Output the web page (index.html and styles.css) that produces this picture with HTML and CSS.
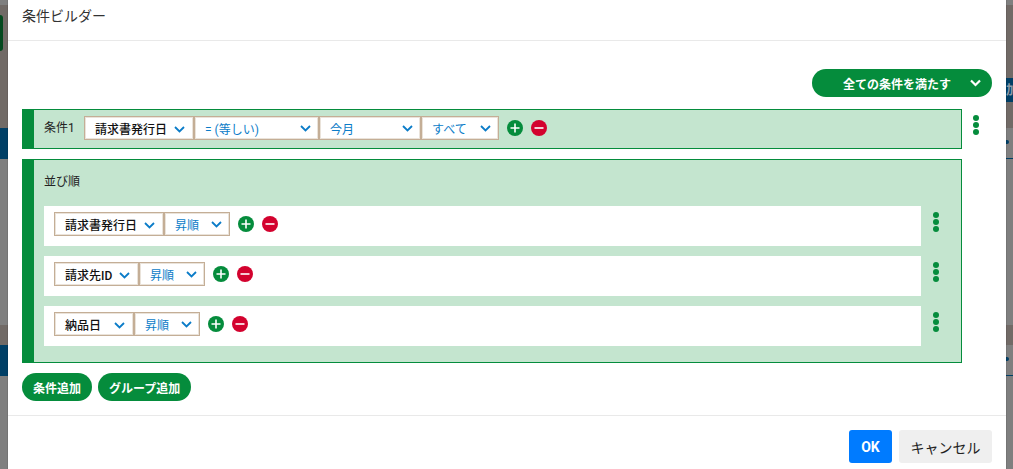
FILE: index.html
```html
<!DOCTYPE html>
<html>
<head>
  <meta charset="utf-8">
  <title>条件ビルダー</title>
  <link rel="stylesheet" href="styles.css">
</head>
<body>
  <!-- page behind the dialog, only the edges show -->
  <div class="backdrop">
    <span class="bg-brown bg-l1"></span>
    <span class="bg-brown bg-l2"></span>
    <span class="bg-tab"></span>
    <span class="bg-band bg-band-left1"></span>
    <span class="bg-band bg-band-left2"></span>
    <span class="bg-brown bg-r1"></span>
    <span class="bg-brown bg-r2"></span>
    <span class="bg-band bg-band-right1">加</span>
    <span class="bg-dot bg-dot1"></span>
    <span class="bg-band bg-line1"></span>
    <span class="bg-dot bg-dot2"></span>
    <span class="bg-band bg-line2"></span>
  </div>

  <div class="modal">
    <div class="modal-header">条件ビルダー</div>

    <div class="modal-body">
      <div class="match-row">
        <button class="match-btn">
          <span>全ての条件を満たす</span>
          <svg class="chev" width="11" height="8" viewBox="0 0 11 8"><path d="M1 1.500 5.500 6 10 1.500" fill="none" stroke="#fff" stroke-width="2.200"/></svg>
        </button>
      </div>

      <div class="rule-line">
        <div class="group rule">
          <span class="rule-label">条件1</span>
          <div class="selects">
            <div class="sel sel-field w-110">請求書発行日<svg class="arrow" width="11" height="7" viewBox="0 0 11 7"><path d="M1 1 5.500 5.500 10 1" fill="none" stroke="#0b7cc8" stroke-width="1.800"/></svg></div>
            <div class="sel w-125">= (等しい)<svg class="arrow" width="11" height="7" viewBox="0 0 11 7"><path d="M1 1 5.500 5.500 10 1" fill="none" stroke="#0b7cc8" stroke-width="1.800"/></svg></div>
            <div class="sel w-102">今月<svg class="arrow" width="11" height="7" viewBox="0 0 11 7"><path d="M1 1 5.500 5.500 10 1" fill="none" stroke="#0b7cc8" stroke-width="1.800"/></svg></div>
            <div class="sel w-78">すべて<svg class="arrow" width="11" height="7" viewBox="0 0 11 7"><path d="M1 1 5.500 5.500 10 1" fill="none" stroke="#0b7cc8" stroke-width="1.800"/></svg></div>
          </div>
          <svg class="round" width="16" height="16" viewBox="0 0 16 16"><circle cx="8" cy="8" r="8" fill="#058c3c"/><path d="M8 3.500v9M3.500 8h9" stroke="#fff" stroke-width="1.600"/></svg>
          <svg class="round" width="16" height="16" viewBox="0 0 16 16"><circle cx="8" cy="8" r="8" fill="#d3022e"/><path d="M3.500 8h9" stroke="#fff" stroke-width="1.600"/></svg>
        </div>
        <div class="dots"><i></i><i></i><i></i></div>
      </div>

      <div class="rule-line sort-line">
        <div class="group sort">
          <div class="sort-title">並び順</div>

          <div class="sort-line-item">
            <div class="sort-row">
              <div class="selects">
                <div class="sel sel-field w-110">請求書発行日<svg class="arrow" width="11" height="7" viewBox="0 0 11 7"><path d="M1 1 5.500 5.500 10 1" fill="none" stroke="#0b7cc8" stroke-width="1.800"/></svg></div>
                <div class="sel w-66">昇順<svg class="arrow" width="11" height="7" viewBox="0 0 11 7"><path d="M1 1 5.500 5.500 10 1" fill="none" stroke="#0b7cc8" stroke-width="1.800"/></svg></div>
              </div>
              <svg class="round" width="16" height="16" viewBox="0 0 16 16"><circle cx="8" cy="8" r="8" fill="#058c3c"/><path d="M8 3.500v9M3.500 8h9" stroke="#fff" stroke-width="1.600"/></svg>
              <svg class="round" width="16" height="16" viewBox="0 0 16 16"><circle cx="8" cy="8" r="8" fill="#d3022e"/><path d="M3.500 8h9" stroke="#fff" stroke-width="1.600"/></svg>
            </div>
            <div class="dots"><i></i><i></i><i></i></div>
          </div>

          <div class="sort-line-item">
            <div class="sort-row">
              <div class="selects">
                <div class="sel sel-field w-85">請求先ID<svg class="arrow" width="11" height="7" viewBox="0 0 11 7"><path d="M1 1 5.500 5.500 10 1" fill="none" stroke="#0b7cc8" stroke-width="1.800"/></svg></div>
                <div class="sel w-66">昇順<svg class="arrow" width="11" height="7" viewBox="0 0 11 7"><path d="M1 1 5.500 5.500 10 1" fill="none" stroke="#0b7cc8" stroke-width="1.800"/></svg></div>
              </div>
              <svg class="round" width="16" height="16" viewBox="0 0 16 16"><circle cx="8" cy="8" r="8" fill="#058c3c"/><path d="M8 3.500v9M3.500 8h9" stroke="#fff" stroke-width="1.600"/></svg>
              <svg class="round" width="16" height="16" viewBox="0 0 16 16"><circle cx="8" cy="8" r="8" fill="#d3022e"/><path d="M3.500 8h9" stroke="#fff" stroke-width="1.600"/></svg>
            </div>
            <div class="dots"><i></i><i></i><i></i></div>
          </div>

          <div class="sort-line-item">
            <div class="sort-row">
              <div class="selects">
                <div class="sel sel-field w-80">納品日<svg class="arrow" width="11" height="7" viewBox="0 0 11 7"><path d="M1 1 5.500 5.500 10 1" fill="none" stroke="#0b7cc8" stroke-width="1.800"/></svg></div>
                <div class="sel w-66">昇順<svg class="arrow" width="11" height="7" viewBox="0 0 11 7"><path d="M1 1 5.500 5.500 10 1" fill="none" stroke="#0b7cc8" stroke-width="1.800"/></svg></div>
              </div>
              <svg class="round" width="16" height="16" viewBox="0 0 16 16"><circle cx="8" cy="8" r="8" fill="#058c3c"/><path d="M8 3.500v9M3.500 8h9" stroke="#fff" stroke-width="1.600"/></svg>
              <svg class="round" width="16" height="16" viewBox="0 0 16 16"><circle cx="8" cy="8" r="8" fill="#d3022e"/><path d="M3.500 8h9" stroke="#fff" stroke-width="1.600"/></svg>
            </div>
            <div class="dots"><i></i><i></i><i></i></div>
          </div>
        </div>
      </div>

      <div class="add-row">
        <button class="add-btn">条件追加</button>
        <button class="add-btn">グループ追加</button>
      </div>
    </div>

    <div class="modal-footer">
      <button class="btn-ok">OK</button>
      <button class="btn-cancel">キャンセル</button>
    </div>
  </div>
</body>
</html>
```

FILE: styles.css
```css
* {
  margin: 0;
  padding: 0;
  box-sizing: border-box;
}

html, body {
  height: 469px;
  overflow: hidden;
}

body {
  background: #7f7f7f;
  font-family: "Roboto", "Noto Sans CJK JP", sans-serif;
  color: #222;
  position: relative;
}

.backdrop {
  position: absolute;
  inset: 0;
}

.backdrop span {
  position: absolute;
  display: block;
}

.bg-brown {
  background: #716a66;
  width: 8px;
}

.bg-l1 { left: 0; top: 5px; height: 123px; }
.bg-l2 { left: 0; top: 325px; height: 20px; }
.bg-r1 { right: 0; top: 5px; height: 123px; }
.bg-r2 { right: 0; top: 325px; height: 20px; }

.bg-tab {
  left: 0;
  top: 15px;
  width: 3px;
  height: 36px;
  background: #04491f;
  border-radius: 0 3px 3px 0;
}

.bg-band {
  background: #003f66;
}

.bg-band-left1 {
  left: 0;
  top: 128px;
  width: 8px;
  height: 31px;
}

.bg-band-left2 {
  left: 0;
  top: 345px;
  width: 8px;
  height: 31px;
}

.bg-band-right1 {
  right: 0;
  top: 78px;
  width: 7px;
  height: 24px;
  overflow: hidden;
  font-size: 13px;
  font-weight: 700;
  line-height: 24px;
  color: #8d9aa6;
}

.bg-dot {
  width: 3px;
  height: 4px;
  right: 4px;
  background: #003f66;
  border-radius: 0 2px 2px 0;
}

.bg-dot1 { top: 140px; }
.bg-dot2 { top: 357px; }

.bg-line1 { right: 0; top: 158px; width: 7px; height: 1px; }
.bg-line2 { right: 0; top: 375px; width: 7px; height: 1px; }

.modal {
  width: 998px;
  height: 469px;
  margin-left: 8px;
  background: white;
  position: relative;
  box-shadow: 0 0 1px rgba(0,0,0,0.5);
  display: flex;
  flex-direction: column;
}

.modal-header {
  height: 41px;
  padding: 6px 14px 0;
  font-size: 14px;
  line-height: 20px;
  color: #333;
  border-bottom: 1px solid #e9e9e9;
}

.modal-body {
  flex: 1;
  padding: 28px 14px 0;
}

.match-row {
  display: flex;
  justify-content: flex-end;
  height: 28px;
  margin-bottom: 12px;
}

.match-btn {
  width: 180px;
  height: 28px;
  background: #058c3c;
  color: white;
  border: none;
  border-radius: 14px;
  font: inherit;
  font-size: 12px;
  font-weight: 700;
  display: flex;
  align-items: center;
  padding-left: 31px;
  position: relative;
}

.chev {
  position: absolute;
  right: 11px;
  top: 10px;
}

.rule-line {
  display: flex;
  align-items: flex-start;
}

.group {
  width: 940px;
  background: #c4e5cf;
  border: 1px solid #058c3c;
  border-left: 12px solid #058c3c;
}

.rule {
  height: 40px;
  display: flex;
  align-items: flex-start;
  padding: 6px 0 0 10px;
  margin-bottom: 10px;
}

.rule-label {
  font-size: 12px;
  line-height: 25px;
  width: 40px;
  color: #222;
}

.selects {
  display: flex;
  margin-right: 8px;
}

.sel {
  height: 24px;
  border: 1px solid #c4ae96;
  box-shadow: inset 0 0 0 1px rgba(196,174,150,0.35);
  background: white;
  font-size: 12px;
  color: #0b7cc8;
  display: flex;
  align-items: center;
  padding-left: 10px;
  position: relative;
}

.sel-field {
  color: #111;
  font-weight: 500;
}

.arrow {
  position: absolute;
  right: 7px;
  top: 8px;
}

.sel-field .arrow {
  right: 8px;
  top: 9px;
}

.w-110 { width: 110px; }
.w-125 { width: 125px; }
.w-102 { width: 102px; }
.w-78 { width: 78px; }
.w-85 { width: 85px; }
.w-80 { width: 80px; }
.w-66 { width: 66px; }

.round {
  margin: 4px 8px 0 0;
  flex: none;
}

.dots {
  width: 6px;
  margin-left: 11px;
  margin-top: 6px;
  display: flex;
  flex-direction: column;
  gap: 1px;
}

.dots i {
  display: block;
  width: 6px;
  height: 6px;
  border-radius: 50%;
  background: #058c3c;
}

.sort {
  height: 204px;
  padding: 0 0 0 10px;
}

.sort-title {
  font-size: 12px;
  color: #222;
  line-height: 16px;
  padding-top: 14px;
  height: 46px;
}

.sort-line-item {
  display: flex;
  align-items: flex-start;
  margin-bottom: 10px;
}

.sort-row {
  width: 877px;
  height: 40px;
  background: white;
  display: flex;
  align-items: flex-start;
  padding: 6px 0 0 10px;
}

.sort-line-item .dots {
  margin-left: 12px;
  margin-top: 6px;
}

.add-row {
  display: flex;
  gap: 6px;
  margin-top: 10px;
}

.add-btn {
  height: 28px;
  background: #058c3c;
  color: white;
  border: none;
  border-radius: 14px;
  font: inherit;
  font-size: 12px;
  font-weight: 700;
  padding: 0 11px;
}

.modal-footer {
  height: 54px;
  border-top: 1px solid #e9e9e9;
  display: flex;
  justify-content: flex-end;
  gap: 7px;
  padding: 14px 14px 0 0;
}

.btn-ok {
  width: 43px;
  height: 33px;
  background: #007bff;
  color: white;
  border: none;
  border-radius: 3px;
  font: inherit;
  font-size: 14px;
  font-weight: 700;
}

.btn-cancel {
  width: 93px;
  height: 33px;
  background: #efefef;
  color: #222;
  border: none;
  border-radius: 3px;
  font: inherit;
  font-size: 14px;
}
```
